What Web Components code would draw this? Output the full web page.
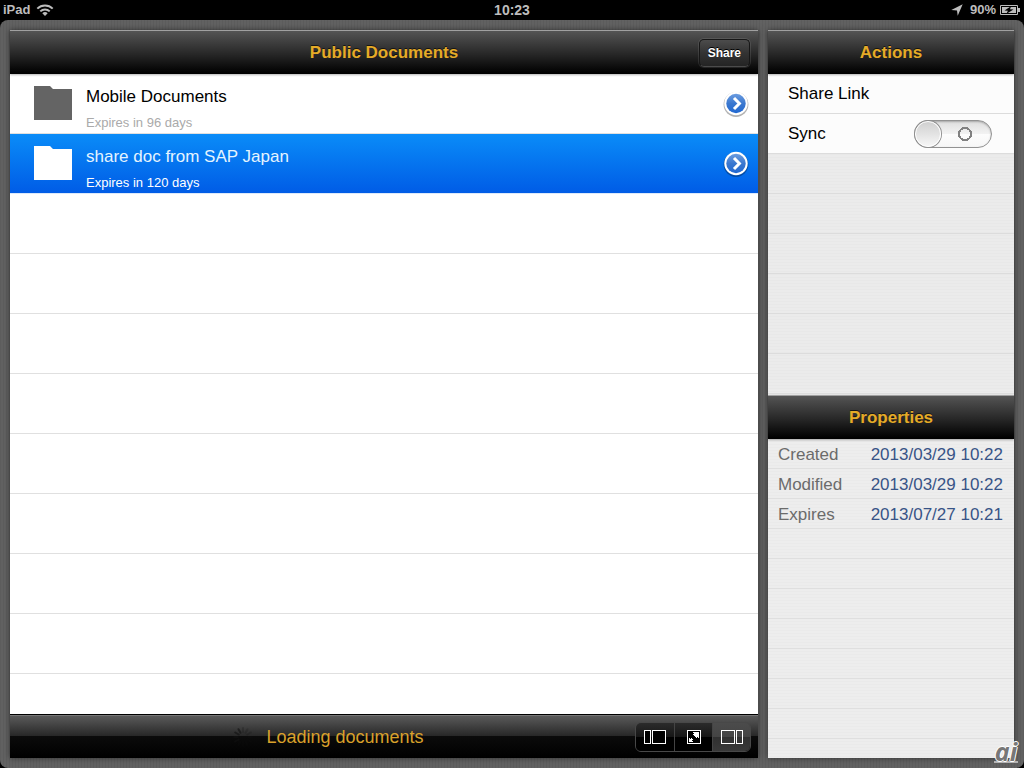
<!DOCTYPE html>
<html lang="en">
<head>
<meta charset="utf-8">
<title>Public Documents</title>
<style>
  html, body { margin: 0; height: 100%; background: #000; }
  body { font-family: "Liberation Sans", Arial, Helvetica, sans-serif; }
</style>
</head>
<body>
<docs-app></docs-app>

<script>
const define = (name, html, setup) => {
  const template = document.createElement('template');
  template.innerHTML = html;
  customElements.define(name, class extends HTMLElement {
    constructor() {
      super();
      this.attachShadow({ mode: 'open' }).append(template.content.cloneNode(true));
      if (setup) setup(this, this.shadowRoot);
    }
  });
};

define('status-bar', `
  <style>
    :host { display: grid; grid-template-columns: 1fr auto 1fr; align-items: center; height: 20px;
      padding: 0 3px; background: #000; color: #bdbdbd; font-size: 14px; line-height: 20px; }
    div { display: flex; align-items: center; }
    .left { gap: 6px; font-size: 13px; }
    .mid, .pct { font-weight: bold; }
    .right { justify-content: flex-end; font-size: 13px; }
    .arrow { margin-right: 7px; }
    .battery { margin-left: 3px; }
    svg { display: block; }
  </style>
  <div class="left"><b>iPad</b>
    <svg width="18" height="12" viewBox="0 0 18 12" fill="none" stroke="#bdbdbd" stroke-width="2">
      <path d="M1.3 4.6a11 11 0 0 1 15.400 0M4.300 7.400a6.800 6.800 0 0 1 9.400 0"/>
      <path d="M9 12L6.300 9.300a4 4 0 0 1 5.400 0z" fill="#bdbdbd" stroke="none"/>
    </svg></div>
  <div class="mid">10:23</div>
  <div class="right">
    <svg class="arrow" width="12" height="12" viewBox="0 0 12 12" fill="#bdbdbd"><path d="M11.700 .3L6.700 11.800 6 6.500 .3 6z"/></svg>
    <span class="pct">90%</span>
    <svg class="battery" width="22" height="12" viewBox="0 0 22 12">
      <path d="M1.500 1.500h17v9h-17z" fill="none" stroke="#bdbdbd"/>
      <path d="M3 3h14v6H3z" fill="#bdbdbd"/><path d="M19 4h2v4h-2z" fill="#bdbdbd"/>
      <path d="M12 2.200L5.500 6.600l3.400.2-1.400 3L14.500 5.400l-3.500-.2z" fill="#000"/>
    </svg>
  </div>`);

define('title-bar', `
  <style>
    :host { display: grid; grid-template-columns: 1fr auto 1fr; align-items: center; box-sizing: border-box;
      height: 44px; padding: 0 8px; border-top: 1px solid #a0a0a0;
      background: linear-gradient(#545454, #262626 55%, #000 98%);
      position: relative; box-shadow: 0 1px 2px rgba(0,0,0,.3); }
    h2 { grid-column: 2; margin: 0; font-size: 17px; line-height: 22px; color: #e5ab27;
      text-shadow: 0 -1px 0 rgba(0,0,0,.6); }
    .end { justify-self: end; }
  </style>
  <h2><slot></slot></h2><div class="end"><slot name="end"></slot></div>`);

define('bar-button', `
  <style>
    :host { display: block; }
    button { display: block; box-sizing: border-box; height: 28px; padding: 0 8px; border: 1px solid #171717;
      border-bottom-color: #4b4b4b; border-radius: 5px; color: #fff; font: bold 12px/24px "Liberation Sans", Arial, sans-serif;
      background: linear-gradient(#4c4c4c, #333 50%, #242424); box-shadow: 0 0 0 1px rgba(255,255,255,.1);
      text-shadow: 0 -1px 0 #000; }
  </style>
  <button type="button"><slot></slot></button>`);

define('document-row', `
  <style>
    :host { display: flex; box-sizing: border-box; height: 60px; padding: 0 9px 0 24px; background: #fff;
      color: #000; border-bottom: 1px solid #e0e0e0; --icon: #646464; --sub: #aaa; }
    :host([selected]) { color: #e4f4ff; --icon: #fff; --sub: #fff; border-color: #dbe9fb;
      background: linear-gradient(#0a8cf8, #005ce6); }
    .folder { flex: none; margin: 12px 14px 0 0; fill: var(--icon); }
    .text { flex: 1; padding-top: 12px; }
    .name { font-size: 17px; line-height: 22px; }
    .sub { margin-top: 6px; font-size: 13px; line-height: 18px; color: var(--sub); }
    button { flex: none; align-self: center; width: 26px; height: 26px; padding: 0; border: 0; background: none; }
    svg { display: block; }
  </style>
  <svg class="folder" width="38" height="34" viewBox="0 0 38 34"><path d="M0 0h16l3 3h19v31H0z"/></svg>
  <div class="text"><div class="name"><slot></slot></div><div class="sub"><slot name="sub"></slot></div></div>
  <button type="button" aria-label="Details">
    <svg width="26" height="26" viewBox="0 0 26 26">
      <defs><linearGradient id="g" x2="0" y2="1"><stop stop-color="#6b9ce0"/><stop offset=".5" stop-color="#3b78cf"/><stop offset="1" stop-color="#2269d2"/></linearGradient></defs>
      <circle cx="13" cy="13.500" r="12.400" fill="#000" opacity=".3"/>
      <circle cx="13" cy="12.500" r="11.700" fill="#fff"/><circle cx="13" cy="12.500" r="9.700" fill="url(#g)"/>
      <path d="M11 7l5.400 5.500L11 18" fill="none" stroke="#fff" stroke-width="3"/>
    </svg>
  </button>`);

define('document-list', `
  <style>
    :host { display: block; flex: 1;
      background: repeating-linear-gradient(#fff 0 59px, #e0e0e0 59px 60px); }
  </style><slot></slot>`);

define('view-switch', `
  <style>
    :host { display: flex; box-sizing: border-box; height: 30px; border: 1px solid #484848; border-radius: 6px; overflow: hidden; }
    button { display: flex; align-items: center; justify-content: center; box-sizing: border-box; width: 38px; height: 28px;
      padding: 0; border: 0; background: linear-gradient(#2b2b2b, #161616 50%, #000 50%); }
    button + button { border-left: 1px solid #444; }
    button[aria-pressed=true] { background: linear-gradient(#4b4b4b, #444 50%, #303030 50%, #393939); }
    svg { fill: none; stroke: #fff; shape-rendering: crispEdges; }
  </style>
  <button type="button" aria-label="List on the left" aria-pressed="false">
    <svg width="22" height="16"><path d="M.5 1.500h6v13h-6zM8.500 1.500h13v13h-13z" fill="#000"/></svg></button>
  <button type="button" aria-label="Full screen" aria-pressed="false">
    <svg width="14" height="16"><path d="M.5 1.500h13v13H.5z" fill="#000"/>
      <path d="M6 3h6v6h-1V8h-1v1H9V8H8V7H7V6H6V5h1V4H6zM2 9h1v1h1V9h1v1h1v1H5v1h1v1H2z" fill="#fff" stroke="none"/></svg></button>
  <button type="button" aria-label="Details on the right" aria-pressed="true">
    <svg width="22" height="16"><path d="M.5 1.500h13v13H.5zM15.500 1.500h6v13h-6z"/></svg></button>`);

define('tool-bar', `
  <style>
    :host { display: flex; align-items: center; box-sizing: border-box; height: 44px; padding: 0 7px 0 12px;
      border-top: 1px solid #000; box-shadow: inset 0 1px 0 #777;
      background: linear-gradient(#5c5c5c, #262626 50%, #0b0b0b 50%, #000); }
    .status { flex: 1; display: flex; align-items: center; justify-content: center; gap: 13px;
      color: #d9a12b; font-size: 18px; line-height: 24px; }
  </style>
  <div class="status">
    <svg width="20" height="20" viewBox="-10 -10 20 20" stroke="#111" stroke-width="2" stroke-linecap="round" opacity=".6">
      <path d="M0-5v-4M2.500-4.300l2-3.500M4.300-2.500l3.500-2M5 0h4M4.300 2.500l3.500 2M2.500 4.300l2 3.500M0 5v4M-2.500 4.300l-2 3.500" opacity=".35"/>
      <path d="M-4.300 2.500l-3.500 2M-5 0h-4M-4.300-2.500l-3.500-2M-2.500-4.300l-2-3.500"/>
    </svg>
    <span role="status"><slot></slot></span>
  </div>
  <view-switch></view-switch>`);

define('toggle-switch', `
  <style>
    :host { display: block; }
    input { appearance: none; display: flex; align-items: center; box-sizing: border-box; width: 78px; height: 28px; margin: 0;
      border: 1px solid #929292; border-radius: 14px;
      background: radial-gradient(circle at 50px 13px, transparent 5px, #818181 5px 7px, transparent 7px),
        linear-gradient(#dedede, #f3f3f3 50%, #fdfdfd 50%, #f6f6f6); box-shadow: inset 0 1px 2px rgba(0,0,0,.25); }
    input::before { content: ""; box-sizing: border-box; width: 26px; height: 26px; border-radius: 50%;
      border: 1px solid #fff; background: linear-gradient(#d0d0d0, #f6f6f6); box-shadow: 0 0 0 1px #909090; }
  </style>
  <input type="checkbox" role="switch">`, (host, root) => {
    root.querySelector('input').setAttribute('aria-label', host.getAttribute('label') || 'Sync');
  });

define('action-row', `
  <style>
    :host { display: flex; align-items: center; justify-content: space-between; box-sizing: border-box; height: 40px;
      padding: 0 22px 0 20px; background: #fcfcfc; border-bottom: 1px solid #dcdcdc; color: #000;
      font-size: 17px; line-height: 22px; }
    ::slotted(a) { color: inherit; text-decoration: none; }
  </style><slot></slot><slot name="control"></slot>`);

define('action-list', `
  <style>
    :host { display: block; flex: 1;
      background: repeating-linear-gradient(transparent 0 39px, #dcdcdc 39px 40px),
        repeating-linear-gradient(#ebebeb 0 2px, #e8e8e8 2px 3px); }
  </style><slot></slot>`);

define('property-list', `
  <style>
    :host { display: block; flex: 1;
      background: repeating-linear-gradient(transparent 0 29px, #dfdfdf 29px 30px),
        repeating-linear-gradient(#ededed 0 2px, #eaeaea 2px 3px); }
    table { width: 100%; border-collapse: collapse; font-size: 17px; line-height: 28px; }
    th { padding: 2px 0 0 10px; font-weight: normal; text-align: left; color: #6b6b6b; }
    td { padding: 2px 11px 0 0; text-align: right; color: #385487; }
  </style>
  <table>
    <tr><th scope="row">Created</th><td>2013/03/29 10:22</td></tr>
    <tr><th scope="row">Modified</th><td>2013/03/29 10:22</td></tr>
    <tr><th scope="row">Expires</th><td>2013/07/27 10:21</td></tr>
  </table>`);

define('site-mark', `
  <style>
    :host { position: absolute; right: 6px; bottom: 5px; width: 24px; text-align: center;
      border-bottom: 2px solid #b4b4b4; font: italic bold 25px/20px "Open Sans", "Liberation Sans", sans-serif; color: #777;
      text-shadow: 1px 0 #fff, -1px 0 #fff, 0 1px #fff, 0 -1px #fff; }
  </style>ai`);

define('docs-app', `
  <style>
    :host { display: flex; flex-direction: column; min-height: 100vh; }
    main { position: relative; flex: 1; display: grid; grid-template-columns: minmax(0, 1fr) 246px; gap: 10px; padding: 10px;
      border-radius: 8px;
      background: repeating-linear-gradient(90deg, rgba(0,0,0,.05) 0 1px, transparent 1px 3px), #626262; }
    section { display: flex; flex-direction: column; min-width: 0; }
    .docs, aside { box-shadow: 0 0 6px rgba(0,0,0,.5); }
    aside { display: grid; grid-template-rows: calc(50% + 1px) 1fr; }
  </style>
  <status-bar></status-bar>
  <main>
    <section class="docs">
      <title-bar>Public Documents<bar-button slot="end">Share</bar-button></title-bar>
      <document-list>
        <document-row>Mobile Documents<span slot="sub">Expires in 96 days</span></document-row>
        <document-row selected>share doc from SAP Japan<span slot="sub">Expires in 120 days</span></document-row>
      </document-list>
      <tool-bar>Loading documents</tool-bar>
    </section>
    <aside>
      <section>
        <title-bar>Actions</title-bar>
        <action-list>
          <action-row><a href="#share">Share Link</a></action-row>
          <action-row>Sync<toggle-switch slot="control"></toggle-switch></action-row>
        </action-list>
      </section>
      <section>
        <title-bar>Properties</title-bar>
        <property-list></property-list>
      </section>
    </aside>
    <site-mark></site-mark>
  </main>`);
</script>
</body>
</html>
